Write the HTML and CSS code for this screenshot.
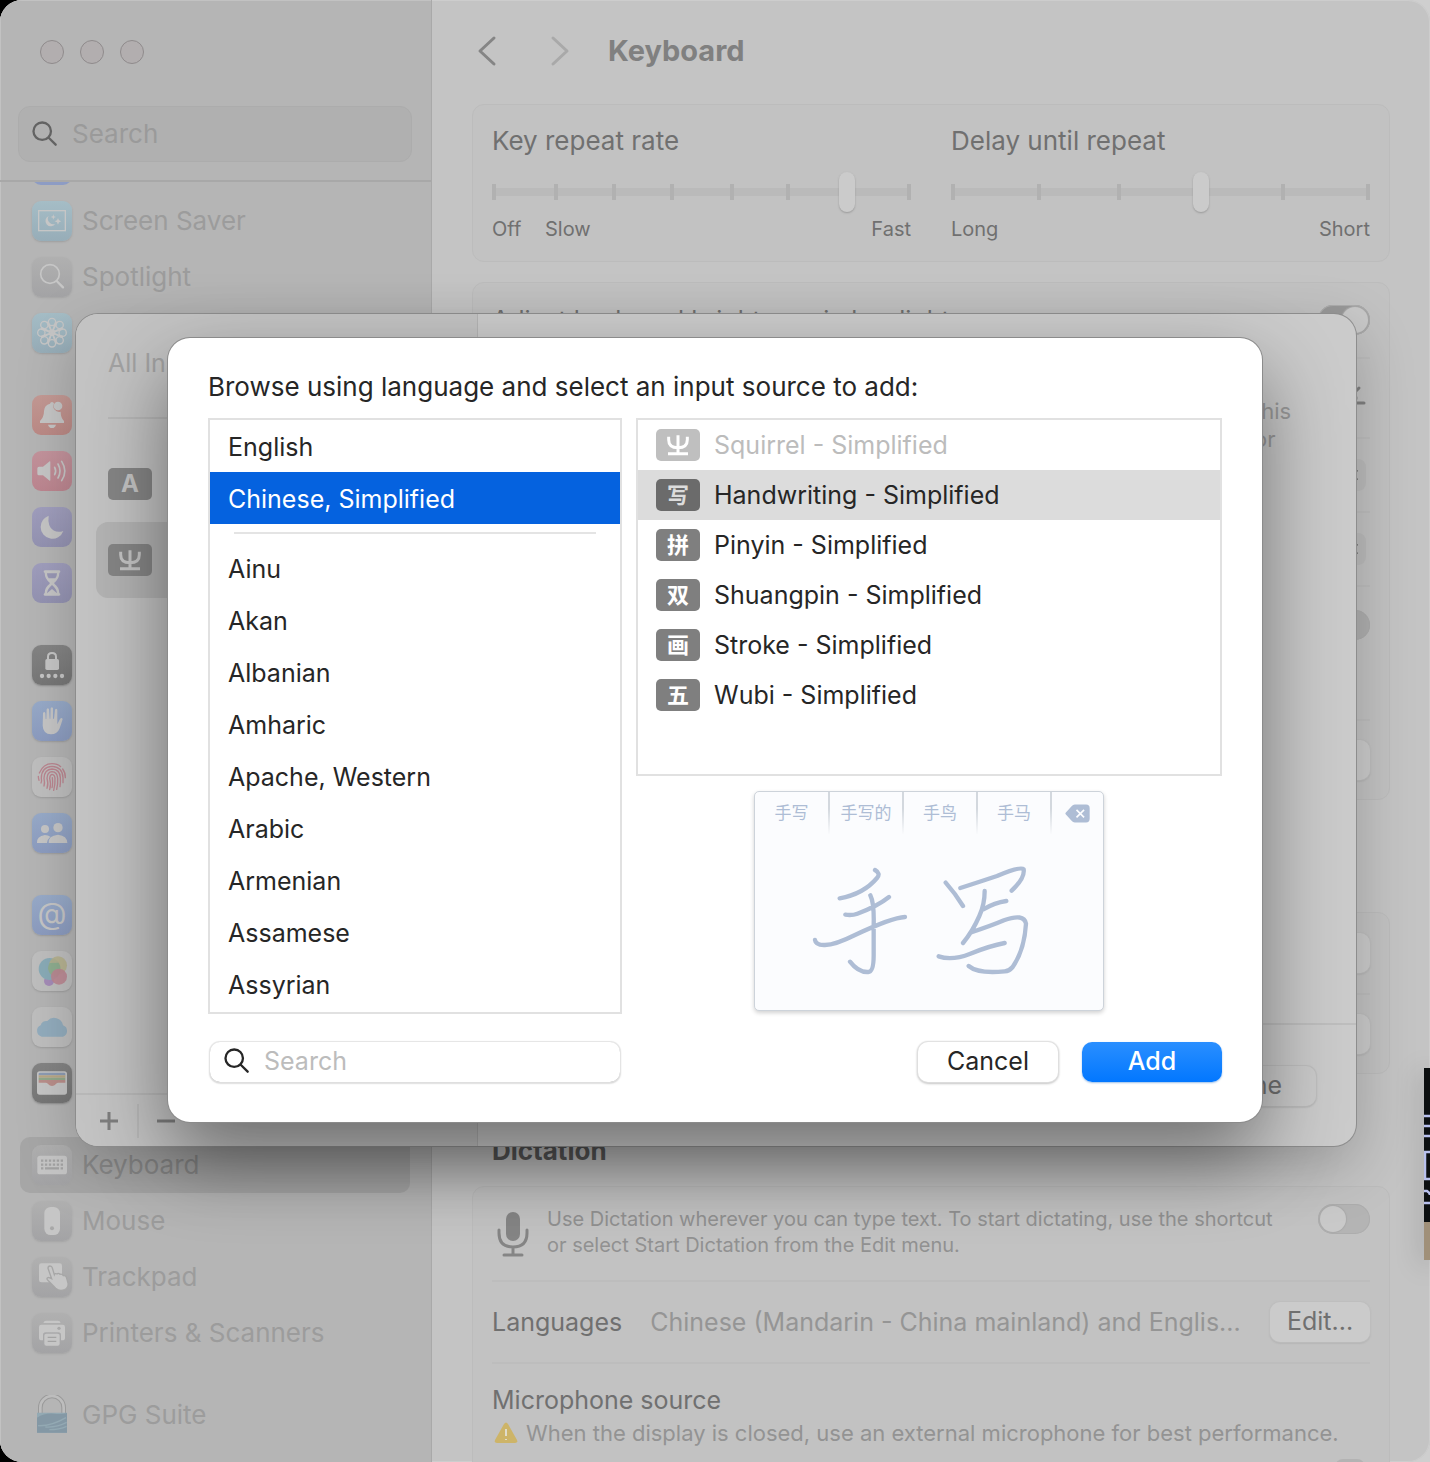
FILE: index.html
```html
<!DOCTYPE html>
<html lang="en">
<head>
<meta charset="utf-8">
<meta name="viewport" content="width=device-width, initial-scale=1">
<title>Keyboard</title>
<link rel="stylesheet" href="styles.css">
</head>
<body>
<div class="window">
  <aside class="sidebar">
    <div class="lights"><span class="light"></span><span class="light"></span><span class="light"></span></div>
    <div class="side-search">
      <svg class="lens" viewBox="0 0 28 28" aria-hidden="true"><circle cx="11" cy="11" r="9.4"/><path d="M18 18l7.5 7.5"/></svg>
      <input type="search" placeholder="Search" aria-label="Search settings">
    </div>
    <nav class="side-list">
      <ul class="group">
        <li><a class="item" href="#displays" aria-label="Displays"><span class="icon royal"></span></a></li>
        <li><a class="item" href="#saver"><svg class="icon sky" viewBox="0 0 120 120" aria-hidden="true"><rect class="ln" x="20" y="29" width="80" height="60" stroke-width="4"/><path d="M50 45a16 16 0 1 0 20 23a16 16 0 0 1-20-23zM64 40l2 6 6 2-6 2-2 6-2-6-6-2 6-2zM78 51l3 7 7 3-7 3-3 7-3-7-7-3 7-3z"/></svg><span>Screen Saver</span></a></li>
        <li><a class="item" href="#spotlight"><svg class="icon ash" viewBox="0 0 120 120" aria-hidden="true"><circle class="ln" cx="54" cy="51" r="28" stroke-width="5"/><path class="ln" d="M74 72l19 19" stroke-width="7"/></svg><span>Spotlight</span></a></li>
        <li><a class="item" href="#wallpaper" aria-label="Wallpaper"><svg class="icon sky" viewBox="0 0 120 120" aria-hidden="true"><g class="ln" stroke-width="4"><circle cx="60" cy="27" r="11"/><circle cx="60" cy="91" r="11"/><circle cx="28" cy="59" r="11"/><circle cx="92" cy="59" r="11"/><circle cx="37" cy="36" r="11"/><circle cx="83" cy="36" r="11"/><circle cx="37" cy="82" r="11"/><circle cx="83" cy="82" r="11"/><circle cx="60" cy="59" r="8"/><path d="M49 27l22 64M71 27L49 91M28 48l64 22M28 70l64-22M45 28l30 62M75 28L45 90M29 44l62 30M29 74l62-30"/></g></svg></a></li>
      </ul>
      <ul class="group">
        <li><a class="item" href="#notifications" aria-label="Notifications"><svg class="icon red" viewBox="0 0 120 120" aria-hidden="true"><path d="M60 21q5 0 6 5a17 17 0 0 0 20 24q0 18 10 28v6H24v-6q12-12 12-30 1-18 18-22 1-5 6-5zM48 89h24q-3 10-12 10t-12-10z"/><circle cx="78" cy="33" r="13"/></svg></a></li>
        <li><a class="item" href="#sound" aria-label="Sound"><svg class="icon pink" viewBox="0 0 120 120" aria-hidden="true"><path d="M16 52q0-5 5-5h12l20-16q2-1 2 2v54q0 3-2 2L33 73H21q-5 0-5-5z"/><path class="ln" d="M68 49q6 11 0 22M78 39q12 21 0 42M89 31q19 29 0 58" stroke-width="5"/></svg></a></li>
        <li><a class="item" href="#focus" aria-label="Focus"><svg class="icon violet" viewBox="0 0 120 120" aria-hidden="true"><path d="M50 26Q26 36 26 60a35 35 0 0 0 68 12Q78 78 64 70 46 58 50 26z"/></svg></a></li>
        <li><a class="item" href="#screentime" aria-label="Screen Time"><svg class="icon violet" viewBox="0 0 120 120" aria-hidden="true"><path d="M39 22h42q5 0 4 5l-3 3q0 17-15 29v3q15 11 15 28l3 3q1 5-4 5H39q-5 0-4-5l3-3q0-17 15-28v-3Q38 47 38 30l-3-3q-1-5 4-5z"/><path class="cut" d="M45 31h30q0 8-5 15H50q-5-7-5-15zM60 66v12L45 91q0-12 15-25zM60 66q15 13 15 25L60 78z"/></svg></a></li>
      </ul>
      <ul class="group">
        <li><a class="item" href="#lock" aria-label="Lock Screen"><svg class="icon coal" viewBox="0 0 120 120" aria-hidden="true"><path class="ln" d="M48 45V35q0-11 12-11t12 11v10" stroke-width="6"/><rect x="40" y="42" width="41" height="33" rx="5"/><circle cx="30" cy="93" r="6.5"/><circle cx="50" cy="93" r="6.5"/><circle cx="70" cy="93" r="6.5"/><circle cx="90" cy="93" r="6.5"/></svg></a></li>
        <li><a class="item" href="#privacy" aria-label="Privacy &amp; Security"><svg class="icon blue" viewBox="0 0 120 120" aria-hidden="true"><path d="M33 36q4-6 7 0l1 18h2l1-29q4-6 7 0l2 28h2l1-31q4-6 7 0v31h3l3-27q4-6 7 0v44l8-16q5-6 8 0-4 14-9 28-7 18-26 18-24-2-25-26z"/></svg></a></li>
        <li><a class="item" href="#touchid" aria-label="Touch ID"><svg class="icon paper" viewBox="0 0 120 120" aria-hidden="true"><g class="print"><path d="M22 48Q34 20 60 20q16 0 26 9M92 36q8 10 8 26M19 58q0 6 2 12M27 78q3-6 1-14 0-34 32-36 32 2 33 34v15M36 87q3-10 0-23 1-27 24-28 24 1 25 26 1 14-1 27M45 94q5-14 0-30 1-19 15-20 16 1 17 20 1 16-3 33M53 98q5-16 0-34 1-11 7-12 8 1 9 12 1 18-4 36M61 62q2 20-1 30"/></g></svg></a></li>
        <li><a class="item" href="#users" aria-label="Users &amp; Groups"><svg class="icon blue" viewBox="0 0 120 120" aria-hidden="true"><circle cx="39" cy="48" r="12"/><circle cx="78" cy="44" r="14"/><path d="M15 90q-2-20 24-24 9 0 16 5-9 8-10 19zM50 90q-2-22 28-25 28 3 28 25z"/></svg></a></li>
      </ul>
      <ul class="group">
        <li><a class="item" href="#accounts" aria-label="Internet Accounts"><span class="icon blue at" aria-hidden="true">@</span></a></li>
        <li><a class="item" href="#gamecenter" aria-label="Game Center"><svg class="icon paper" viewBox="0 0 120 120" aria-hidden="true"><circle cx="51" cy="90" r="15" fill="#a58cb8"/><circle cx="53" cy="54" r="33" fill="#8aacb8"/><circle cx="78" cy="43" r="27" fill="#b5b08a" fill-opacity=".85"/><path d="M80 35a33 33 0 0 1-5 43A27 27 0 0 1 53 36z" fill="#8fae90"/><circle cx="81" cy="77" r="24" fill="#bd8792" fill-opacity=".9"/></svg></a></li>
        <li><a class="item" href="#icloud" aria-label="iCloud"><svg class="icon paper" viewBox="0 0 120 120" aria-hidden="true"><path d="M29 89a18 18 0 0 1-3-34 17 17 0 0 1 20-13 27 27 0 0 1 47 13 18 18 0 0 1 0 34z" fill="#93adbe"/></svg></a></li>
        <li><a class="item" href="#wallet" aria-label="Wallet"><svg class="icon coal" viewBox="0 0 120 120" aria-hidden="true"><rect x="15" y="25" width="90" height="70" rx="8"/><path d="M20 32q0-3 4-3h72q4 0 4 3v5H20z" fill="#8d9cb4"/><path d="M20 37h80v7H20z" fill="#b9a887"/><path d="M20 44h80v7H20z" fill="#93a98c"/><path d="M20 51h80v8H78q-4 0-7 5-4 5-11 5t-11-5q-3-5-7-5H20z" fill="#ba8f8b"/></svg></a></li>
      </ul>
      <ul class="group">
        <li><a class="item current" href="#keyboard" aria-current="page"><svg class="icon ash" viewBox="0 0 120 120" aria-hidden="true"><rect x="16" y="32" width="89" height="56" rx="8"/><path class="keys" d="M27 47h66M27 59h66" stroke-dasharray="7 4.8"/><path class="keys" d="M27 70h7M39 70h42M86 70h7"/></svg><span>Keyboard</span></a></li>
        <li><a class="item" href="#mouse"><svg class="icon ash" viewBox="0 0 120 120" aria-hidden="true"><rect x="37" y="18" width="47" height="84" rx="19"/><circle class="cut2" cx="60" cy="82" r="6"/></svg><span>Mouse</span></a></li>
        <li><a class="item" href="#trackpad"><svg class="icon ash" viewBox="0 0 120 120" aria-hidden="true"><rect x="21" y="19" width="69" height="57" rx="7"/><path class="hand" d="M48 34q0-7 6-7t7 6l6 20q2-5 8-2 4-4 9 1 6-2 10 4 8-2 10 8l4 14q2 14-10 20-16 6-27-4L46 68q-3-6 4-7l9 4z"/></svg><span>Trackpad</span></a></li>
        <li><a class="item" href="#printers"><svg class="icon ash" viewBox="0 0 120 120" aria-hidden="true"><path d="M34 30q2-7 8-7h36q6 0 8 7zM21 42q0-7 7-7h64q7 0 7 7v32q0 8-8 8h-4V66q0-8-8-8H41q-8 0-8 8v16h-4q-8 0-8-8z"/><circle class="cut2" cx="81" cy="46" r="5"/><rect x="37" y="62" width="46" height="36" rx="6"/><path class="keys thin" d="M47 73h26M47 85h26"/></svg><span>Printers &amp; Scanners</span></a></li>
      </ul>
      <ul class="group">
        <li><a class="item" href="#gpg"><svg class="icon" viewBox="0 0 120 120" aria-hidden="true"><path d="M25 58V38a35 35 0 0 1 70 0v20" fill="none" stroke="#9a9a9a" stroke-width="14"/><path d="M25 58V38a35 35 0 0 1 70 0v20" fill="none" stroke="#bdbdbd" stroke-width="8"/><path d="M15 53h90v60H15z" fill="#93a9b3"/><path d="M15 68q22-14 50-12t40-2v59H15z" fill="#8498a5"/><path d="M18 92q40 2 84-24M40 96q34 2 64-14M52 104q30 0 52-10" fill="none" stroke="#93a9b3" stroke-width="4"/></svg><span>GPG Suite</span></a></li>
      </ul>
    </nav>
  </aside>

  <main class="main">
    <header class="bar">
      <button class="nav-btn" aria-label="Back"><svg viewBox="0 0 24 32" aria-hidden="true"><path d="M19 3L5 16l14 13"/></svg></button>
      <button class="nav-btn off" aria-label="Forward" disabled><svg viewBox="0 0 24 32" aria-hidden="true"><path d="M5 3l14 13L5 29"/></svg></button>
      <h1>Keyboard</h1>
    </header>

    <section class="card sliders">
      <div class="slider">
        <label for="rate">Key repeat rate</label>
        <div class="range">
          <svg viewBox="0 0 419 40" preserveAspectRatio="none" aria-hidden="true"><rect class="track" x="1" y="16" width="417" height="8"/><path class="ticks" d="M2 12v16M64 12v16M122 12v16M180 12v16M240 12v16M296 12v16M417 12v16"/></svg>
          <input id="rate" type="range" min="0" max="100" value="86">
        </div>
        <div class="ends"><span class="off-mark">Off</span><span>Slow</span><span class="last">Fast</span></div>
      </div>
      <div class="slider">
        <label for="delay">Delay until repeat</label>
        <div class="range">
          <svg viewBox="0 0 419 40" preserveAspectRatio="none" aria-hidden="true"><rect class="track" x="1" y="16" width="417" height="8"/><path class="ticks" d="M2 12v16M88 12v16M168 12v16M332 12v16M417 12v16"/></svg>
          <input id="delay" type="range" min="0" max="100" value="60">
        </div>
        <div class="ends"><span>Long</span><span class="last">Short</span></div>
      </div>
    </section>

    <section class="card second">
      <div class="row"><label for="adjust">Adjust keyboard brightness in low light</label><input id="adjust" class="switch on" type="checkbox" checked></div>
      <div class="row mid"><svg class="sun" viewBox="0 0 30 30" aria-hidden="true"><circle cx="10" cy="15" r="6"/><path d="M13 11l6-6M17 20h7"/></svg></div>
      <div class="row"><button class="pop" aria-label="Press globe key to"><svg viewBox="0 0 20 32" aria-hidden="true"><path d="M3 13l4-3 4 3M3 19l4 3 4-3"/></svg></button></div>
      <div class="row"><button class="pop" aria-label="Keyboard navigation"><svg viewBox="0 0 20 32" aria-hidden="true"><path d="M3 13l4-3 4 3M3 19l4 3 4-3"/></svg></button></div>
      <div class="row note"><input class="switch" type="checkbox" aria-label="Navigation"></div>
      <div class="row mid"><button class="btn" aria-label="Keyboard shortcuts"></button></div>
    </section>

    <section class="card third">
      <div class="row mid"><button class="btn" aria-label="Edit input sources"></button></div>
      <div class="row mid"><button class="btn" aria-label="Text replacements"></button></div>
    </section>

    <h2>Dictation</h2>
    <section class="card">
      <div class="row dictate">
        <svg class="mic" viewBox="0 0 42 48" aria-hidden="true"><rect x="14" y="2" width="14" height="29" rx="7"/><path d="M7 20v3q0 14 14 14t14-14v-3M21 37v7M12 45h18"/></svg>
        <label for="dictation">Use Dictation wherever you can type text. To start dictating, use the shortcut or select Start Dictation from the Edit menu.</label>
        <input id="dictation" class="switch" type="checkbox">
      </div>
      <div class="row langs">
        <span>Languages</span>
        <span class="value">Chinese (Mandarin - China mainland) and Englis...</span>
        <button class="btn">Edit...</button>
      </div>
      <div class="row source">
        <span>Microphone source</span>
        <p class="warn"><svg viewBox="0 0 24 22" aria-hidden="true"><path class="tri" d="M10 2q2-3 4 0l9 16q1 3-2 3H3q-3 0-2-3z"/><path class="bang" d="M12 7v7M12 17v1"/></svg>When the display is closed, use an external microphone for best performance.</p>
        <button class="stub" aria-label="Microphone"></button>
      </div>
    </section>
  </main>
</div>

<svg class="desk" viewBox="0 0 6 192" aria-hidden="true"><path d="M0 0h6v154H0z" fill="#0c0f10"/><path d="M0 154h6v38H0z" fill="#a09079"/><path d="M0 48h6M0 58h6M0 68h6M6 84H1v27h5M0 123h3q3 2 3 4M0 135h6" fill="none" stroke="#b9c1ee" stroke-width="2.5"/></svg>

<div class="sheet">
  <div class="sources">
    <p class="all">All In</p>
    <ul>
      <li><span class="badge">A</span></li>
      <li class="picked"><span class="badge"><svg viewBox="0 0 132 96" aria-hidden="true"><path d="M38 23v9q0 24 28 24t28-24v-9M66 19v54M36 74h60"/></svg></span></li>
    </ul>
    <div class="tools">
      <button aria-label="Add source"><svg viewBox="0 0 20 20" aria-hidden="true"><path d="M1 10h18M10 1v18"/></svg></button>
      <button aria-label="Remove source"><svg viewBox="0 0 20 20" aria-hidden="true"><path d="M1 10h18"/></svg></button>
    </div>
  </div>
  <div class="options">
    <p>this<br>or</p>
    <div class="foot"><button class="btn">Done</button></div>
  </div>
</div>

<div class="dialog" role="dialog" aria-labelledby="browse">
  <h2 id="browse">Browse using language and select an input source to add:</h2>
  <div class="columns">
    <ul class="langlist">
      <li>English</li>
      <li class="chosen">Chinese, Simplified</li>
      <li class="rule" role="separator"></li>
      <li>Ainu</li>
      <li>Akan</li>
      <li>Albanian</li>
      <li>Amharic</li>
      <li>Apache, Western</li>
      <li>Arabic</li>
      <li>Armenian</li>
      <li>Assamese</li>
      <li>Assyrian</li>
    </ul>
    <div class="right">
      <ul class="methods">
        <li class="dim"><span class="badge"><svg viewBox="0 0 132 96" aria-hidden="true"><path d="M38 23v9q0 24 28 24t28-24v-9M66 19v54M36 74h60"/></svg></span>Squirrel - Simplified</li>
        <li class="sel"><span class="badge">写</span>Handwriting - Simplified</li>
        <li><span class="badge">拼</span>Pinyin - Simplified</li>
        <li><span class="badge">双</span>Shuangpin - Simplified</li>
        <li><span class="badge">画</span>Stroke - Simplified</li>
        <li><span class="badge">五</span>Wubi - Simplified</li>
      </ul>
      <div class="preview">
        <div class="cands">
          <span>手写</span><span>手写的</span><span>手鸟</span><span>手马</span>
          <span class="erase"><svg viewBox="0 0 76 56" aria-hidden="true"><path class="key" d="M2 30q-2-2 0-4L20 6q4-5 10-5h34q11 0 11 11v32q0 11-11 11H30q-6 0-10-5z"/><path class="x" d="M35 17l23 23M58 17L35 40"/></svg></span>
        </div>
        <svg class="ink" viewBox="48 162 1044 528" aria-hidden="true"><path d="M408 270q18 10 6 24-40 48-112 61M319 404q20 3 36-3 60-22 95-50M228 480q2 16 30 15 30 0 90-30 110-52 150-54M394 346q12 24 10 90v90q0 50-16 50-30 2-55-31M620 308q30 34 52 70M664 324q50-16 110-36 70-30 80-20 4 26-36 64M737 333q0 40-16 75-20 46-49 81M733 388q34-20 69-25M700 456q60-20 95-35 60-22 66 10-5 80-40 130-10 12-24 13-80 8-108-16M599 529q40 14 95-8 60-24 103-32"/></svg>
      </div>
    </div>
  </div>
  <div class="actions">
    <div class="find">
      <svg class="lens" viewBox="0 0 28 28" aria-hidden="true"><circle cx="11" cy="11" r="9.4"/><path d="M18 18l7.5 7.5"/></svg>
      <input type="search" placeholder="Search" aria-label="Search languages">
    </div>
    <button class="btn">Cancel</button>
    <button class="btn primary">Add</button>
  </div>
</div>
</body>
</html>
```
FILE: styles.css
```css
* { box-sizing: border-box; }
body, h1, h2, p, ul { margin: 0; padding: 0; }
ul { list-style: none; }
body {
  position: relative;
  height: 100vh;
  overflow: hidden;
  background: linear-gradient(to right, #000 50%, #cfcfcf 50%);
  font: 400 25px/36px Inter, "Noto Sans CJK SC", sans-serif;
  color: #707070;
}
button, input { font: inherit; color: inherit; margin: 0; padding: 0; border: 0; background: none; }
a { color: inherit; text-decoration: none; }
svg { display: block; flex: none; }

/* Window */
.window { display: flex; height: 100vh; overflow: hidden; border-radius: 22px; background: #c4c4c4; box-shadow: inset 0 0 0 1px #cdcdcd; }
.sidebar { flex: 0 0 432px; min-width: 0; display: flex; flex-direction: column; background: #b5b5b5; border-right: 1px solid #a9a9a9; box-shadow: inset 1px 1px 0 #c2c2c2; color: #9c9c9c; font-size: 26px; }
.lights { display: flex; gap: 16px; padding: 40px 40px 42px; }
.light { width: 24px; height: 24px; border: 1px solid #8f8b8c; border-radius: 50%; background: #b2aeaf; }
.side-search { display: flex; align-items: center; height: 56px; margin: 0 19px 18px 18px; padding: 0 13px; gap: 14px; border: 1px solid #acacac; border-radius: 12px; background: #b0b0b0; }
.lens { width: 26px; height: 26px; fill: none; stroke: #636363; stroke-width: 2.5; stroke-linecap: round; }
input[type="search"] { flex: 1; width: 0; min-width: 0; outline: 0; appearance: none; }
input::placeholder { color: #9a9a9a; opacity: 1; }
.side-list { flex: 1; min-height: 0; overflow: hidden; padding: 0 21px 0 20px; border-top: 2px solid #a8a8a8; }
.group { margin-bottom: 26px; }
.group:first-child { margin-top: -45px; }
.item { display: flex; align-items: center; gap: 10px; height: 56px; padding: 0 12px; border-radius: 10px; }
.item.current { background: #a6a6a6; color: #8a8a8a; }
.icon { flex: none; width: 40px; height: 40px; border-radius: 9px; fill: #c6c6c6; }
.icon .ln { fill: none; stroke: #c6c6c6; stroke-linecap: round; }
.royal { background: #8d9cc4; }
.sky { background: linear-gradient(#a5bdc6, #97adb8); box-shadow: 0 1px 2px #9e9e9e; }
.ash { background: linear-gradient(#b0b0b0, #a3a3a5); box-shadow: 0 1px 2px #a4a4a4; }
.red { background: linear-gradient(#c49a95, #bc8a86); }
.pink { background: linear-gradient(#c4949d, #bd8690); }
.violet { background: linear-gradient(#a19fbe, #9493b2); }
.blue { background: linear-gradient(#98abc9, #8c9cc0); box-shadow: 0 1px 2px #9b9b9b; }
.coal { background: linear-gradient(#858585, #777); box-shadow: 0 1px 2px #8b8b8b; }
.paper { background: #bfbfbf; box-shadow: 0 1px 2px #9d9d9d; }
.cut { fill: #9998b6; }
.cut2 { fill: #a8a8a8; }
.keys { fill: none; stroke: #a3a3a3; stroke-width: 7; }
.thin { stroke-width: 4; }
.hand { stroke: #a6a6a6; stroke-width: 4; }
.print { fill: none; stroke: #bb8690; stroke-width: 4; stroke-linecap: round; }
.at { color: #c6c6c6; font-size: 30px; line-height: 36px; text-align: center; }

/* Main pane */
.main { flex: 1; min-width: 0; padding: 0 40px; }
.bar { display: flex; align-items: center; height: 104px; padding: 0 3px 2px; }
.nav-btn { width: 24px; height: 32px; margin-right: 49px; }
.nav-btn svg { width: 24px; fill: none; stroke: #858585; stroke-width: 3; stroke-linecap: round; stroke-linejoin: round; }
.nav-btn.off { margin-right: 36px; }
.nav-btn.off svg { stroke: #a9a9a9; }
h1 { font-size: 29px; font-weight: 700; color: #808080; }
.card { padding: 0 19px; border: 1px solid #bcbcbc; border-radius: 12px; background: #c2c2c2; }
.sliders { display: flex; gap: 40px; padding-top: 17px; padding-bottom: 15px; }
.slider { flex: 1; }
.slider label { display: block; font-size: 26px; line-height: 38px; margin-bottom: 12px; }
.range { display: grid; height: 40px; }
.range svg, .range input { grid-area: 1 / 1; width: 100%; height: 40px; }
.track { fill: #bababa; }
.ticks { stroke: #b1b1b1; stroke-width: 4; }
.range input { appearance: none; }
.range input::-webkit-slider-thumb { appearance: none; width: 16px; height: 40px; border-radius: 8px; background: #cbcbcb; box-shadow: 0 1px 2px #999; }
.ends { display: flex; font-size: 20px; line-height: 34px; }
.off-mark { width: 53px; }
.last { margin-left: auto; }
.second { margin-top: 20px; }
.third { margin-top: 112px; }
.main h2 { padding: 59px 20px 17px; font-size: 26px; line-height: 36px; font-weight: 700; color: #595959; }
.row { display: flex; align-items: center; justify-content: space-between; min-height: 74px; }
.row + .row { border-top: 2px solid #bdbdbd; }
.row.mid { min-height: 80px; justify-content: flex-end; }
.row .pop { margin-left: auto; margin-right: 4px; }
.row.note { min-height: 134px; align-items: flex-start; justify-content: flex-end; padding-top: 23px; }
.row.dictate { min-height: 93px; align-items: flex-start; padding-top: 17px; }
.dictate label { flex: 1; margin: 2px 27px 0 13px; font-size: 20px; line-height: 26px; color: #919191; }
.row.langs { min-height: 82px; }
.value { flex: 1; margin-left: 28px; white-space: nowrap; color: #959595; }
.row.source { display: block; padding-top: 18px; }
.warn { display: flex; align-items: center; gap: 8px; padding-left: 2px; font-size: 22px; line-height: 30px; white-space: nowrap; color: #939393; }
.warn svg { width: 24px; height: 22px; }
.tri { fill: #cdb468; }
.bang { fill: none; stroke: #e0dccb; stroke-width: 2; }
.stub { display: block; width: 30px; height: 30px; margin: 11px 5px 0 auto; border-radius: 8px; background: #b3b3b3; }
.mic { width: 42px; height: 48px; margin-top: 6px; fill: #858585; }
.mic path { fill: none; stroke: #858585; stroke-width: 3; stroke-linecap: round; }
.sun { width: 30px; height: 30px; fill: none; stroke: #808080; stroke-width: 3; stroke-linecap: round; }
.pop { width: 32px; height: 32px; border-radius: 8px; background: #bbb; }
.pop svg { width: 20px; margin-left: 12px; fill: none; stroke: #444; stroke-width: 3; }
.switch { appearance: none; flex: none; width: 52px; height: 30px; border-radius: 15px; background: #b4b4b4; box-shadow: inset 0 0 0 1px #adadad; }
.switch::before { content: ""; display: block; width: 26px; height: 26px; margin: 2px; border-radius: 50%; background: #c9c9c9; box-shadow: 0 0 1px 1px #aaa; }
.switch.on { background: #989898; }
.switch.on::before { margin-left: 24px; }
.note .switch { background: #afafaf; }
.btn { min-width: 100px; height: 40px; padding-bottom: 2px; border-radius: 10px; background: #cbcbcb; box-shadow: 0 0 1px 1px #bebebe, 0 1px 2px #999; line-height: 38px; }

/* Slice of the window behind, at the screen's edge */
.desk { position: absolute; right: 0; top: 1068px; width: 6px; height: 192px; box-shadow: 0 4px 26px rgba(0, 0, 0, .35); }

/* Input sources sheet */
.sheet { position: absolute; inset: 314px 74px 316px 76px; display: flex; border-radius: 22px; background: #cbcbcb; box-shadow: 0 0 0 1px #8d8d8d, 0 20px 60px rgba(0, 0, 0, .22); }
.sources { flex: 0 0 402px; display: flex; flex-direction: column; border-right: 1px solid #b4b4b4; border-radius: 22px 0 0 22px; background: #c3c3c3; }
.all { margin: 31px 32px 0; padding-bottom: 36px; border-bottom: 2px solid #b7b7b7; color: #a2a2a2; }
.sources ul { flex: 1; padding: 27px 20px; }
.sources li { display: flex; align-items: center; height: 76px; padding: 0 12px; border-radius: 12px; }
.sources .picked { background: #b3b3b3; }
.badge { display: grid; place-items: center; flex: none; width: 44px; height: 32px; border-radius: 5px; background: #7f7f7f; color: #fff; font-size: 22px; line-height: 32px; font-weight: 700; }
.badge svg { width: 44px; height: 32px; fill: none; stroke: currentColor; stroke-width: 9; }
.sources .badge { background: #858585; color: #c3c3c3; font-size: 24px; }
.tools { display: flex; height: 53px; padding: 9px 4px; border-top: 2px solid #b8b8b8; }
.tools button { width: 57px; height: 34px; display: grid; place-items: center; }
.tools button + button { width: 55px; border-left: 2px solid #b8b8b8; }
.tools svg { width: 20px; height: 20px; fill: none; stroke: #7d7d7d; stroke-width: 3; }
.options { flex: 1; display: flex; flex-direction: column; justify-content: space-between; }
.options p { align-self: flex-end; width: 102px; padding-top: 83px; font-size: 22px; line-height: 28px; color: #9a9a9a; }
.foot { display: flex; justify-content: flex-end; height: 123px; padding: 41px 40px; border-top: 2px solid #bebebe; }
.foot .btn { width: 130px; color: #717171; }

/* Add source dialog */
.dialog { position: absolute; top: 338px; left: 168px; right: 168px; padding: 28px 40px 40px; border-radius: 22px; background: #fff; box-shadow: 0 0 0 1px #8b8b8b, 0 34px 80px rgba(0, 0, 0, .45); color: #262626; }
.dialog h2 { font-size: 26px; line-height: 42px; font-weight: 400; margin-bottom: 10px; }
.columns { display: grid; grid-template-columns: 414fr 586fr; gap: 14px; }
.langlist, .methods { border: 2px solid #e1e1e1; }
.langlist li { height: 52px; padding: 0 18px; line-height: 54px; }
.langlist .chosen { background: #0562df; color: #fff; }
.langlist .rule { height: 2px; margin: 8px 24px; padding: 0; background: #e4e4e4; }
.langlist { padding-bottom: 2px; }
.right { display: flex; flex-direction: column; align-items: center; gap: 15px; }
.methods { align-self: stretch; padding-bottom: 54px; }
.methods li { display: flex; align-items: center; gap: 14px; height: 50px; padding: 0 18px; line-height: 50px; }
.methods .dim { color: #bcbcbc; }
.dim .badge { background: #bfbfbf; color: #fff; }
.methods .sel { background: #dcdcdc; }
.sel .badge { background: #6b6b6b; color: #dcdcdc; }
.preview { width: 350px; border: 1px solid #cdd3da; border-radius: 5px; background: #fbfcfe; box-shadow: 0 2px 4px rgba(0, 0, 0, .18); }
.cands { display: flex; height: 42px; color: #aebdd5; font-size: 17px; line-height: 43px; }
.cands span { flex: 0 0 74px; text-align: center; border-left: 2px solid; border-image: linear-gradient(#d3d8de 40%, #fbfcfe) 1; }
.cands span:first-child { flex-basis: 73px; border: 0; }
.cands .erase { flex: 1; display: grid; place-items: center; }
.erase svg { width: 25px; height: 19px; }
.key { fill: #aebdd5; }
.x { fill: none; stroke: #fbfcfe; stroke-width: 5; }
.ink { width: 348px; height: 176px; fill: none; stroke: #aebdd5; stroke-width: 13; stroke-linecap: round; stroke-linejoin: round; }
.actions { display: flex; align-items: center; gap: 24px; margin-top: 28px; }
.find { flex: 0 0 410px; min-width: 0; display: flex; align-items: center; height: 40px; margin: 0 auto 0 2px; padding: 0 14px 2px; gap: 14px; border-radius: 10px; box-shadow: 0 0 1px 1px #e4e4e4, 0 1px 2px #999; }
.find .lens { stroke: #262626; }
.find input::placeholder { color: #bcbcbc; }
.dialog .btn { width: 140px; background: #fff; box-shadow: 0 0 1px 1px #e0e0e0, 0 1px 3px #888; }
.dialog .primary { background: linear-gradient(#2a8fff, #0277ff); box-shadow: 0 1px 2px #9bbfe8; color: #fff; font-weight: 500; }
```
